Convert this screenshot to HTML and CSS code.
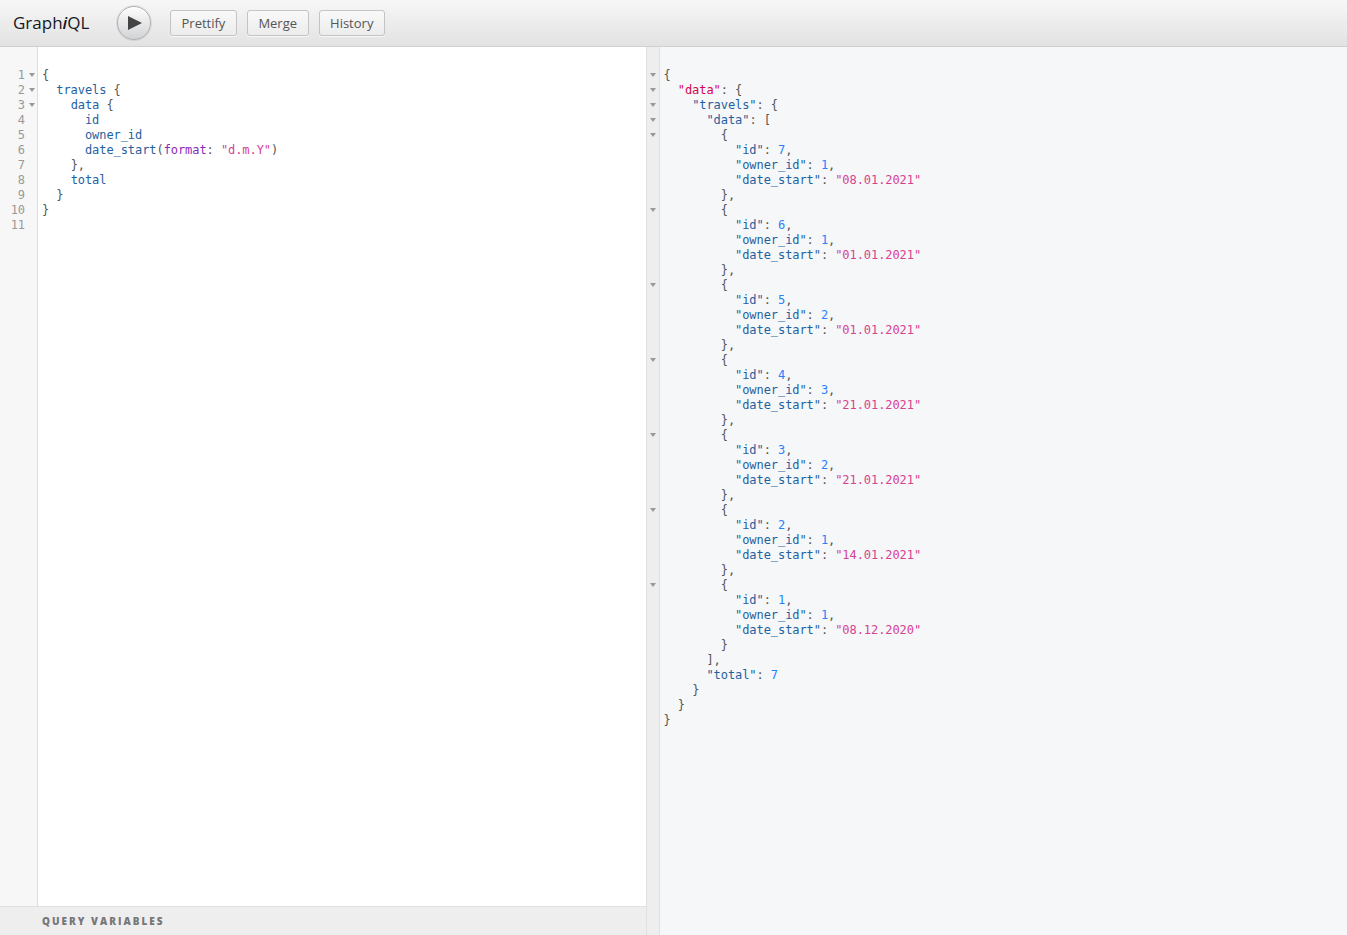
FILE: index.html
```html
<!DOCTYPE html>
<html lang="en">
<head>
    <meta charset="UTF-8">
    <meta name="viewport" content="width=device-width, initial-scale=1.0">
    <title>GraphiQL</title>
    <link rel="stylesheet" href="styles.css">
</head>
<body>
    <div class="topbar">
        <div class="logo">Graph<em>i</em>QL</div>
        <button class="run-button" aria-label="Run">
            <svg width="14" height="14" viewBox="0 0 14 14"><path d="M0 0 L14 7 L0 14 Z" fill="#444"></path></svg>
        </button>
        <button class="tool-button">Prettify</button>
        <button class="tool-button">Merge</button>
        <button class="tool-button">History</button>
    </div>

    <div class="panes">
        <!-- Query editor -->
        <section class="query-pane">
            <div class="editor">
                <div class="gutter">
                    <div class="num">1<i class="fold"></i></div>
                    <div class="num">2<i class="fold"></i></div>
                    <div class="num">3<i class="fold"></i></div>
                    <div class="num">4</div>
                    <div class="num">5</div>
                    <div class="num">6</div>
                    <div class="num">7</div>
                    <div class="num">8</div>
                    <div class="num">9</div>
                    <div class="num">10</div>
                    <div class="num">11</div>
                </div>
<pre class="code"><span class="p">{</span>
  <span class="prop">travels</span> <span class="p">{</span>
    <span class="prop">data</span> <span class="p">{</span>
      <span class="prop">id</span>
      <span class="prop">owner_id</span>
      <span class="prop">date_start</span><span class="p">(</span><span class="attr">format</span><span class="p">:</span> <span class="str">"d.m.Y"</span><span class="p">)</span>
    <span class="p">},</span>
    <span class="prop">total</span>
  <span class="p">}</span>
<span class="p">}</span>
</pre>
            </div>
            <div class="vars-bar">Query Variables</div>
        </section>

        <!-- Result viewer -->
        <section class="result-pane">
            <div class="gutter result-gutter">
                <div class="mark"><i class="fold"></i></div>
                <div class="mark"><i class="fold"></i></div>
                <div class="mark"><i class="fold"></i></div>
                <div class="mark"><i class="fold"></i></div>
                <div class="mark"><i class="fold"></i></div>
                <div class="mark"></div><div class="mark"></div><div class="mark"></div><div class="mark"></div>
                <div class="mark"><i class="fold"></i></div>
                <div class="mark"></div><div class="mark"></div><div class="mark"></div><div class="mark"></div>
                <div class="mark"><i class="fold"></i></div>
                <div class="mark"></div><div class="mark"></div><div class="mark"></div><div class="mark"></div>
                <div class="mark"><i class="fold"></i></div>
                <div class="mark"></div><div class="mark"></div><div class="mark"></div><div class="mark"></div>
                <div class="mark"><i class="fold"></i></div>
                <div class="mark"></div><div class="mark"></div><div class="mark"></div><div class="mark"></div>
                <div class="mark"><i class="fold"></i></div>
                <div class="mark"></div><div class="mark"></div><div class="mark"></div><div class="mark"></div>
                <div class="mark"><i class="fold"></i></div>
            </div>
<pre class="code result-code"><span class="p">{</span>
  <span class="def">"data"</span><span class="p">:</span> <span class="p">{</span>
    <span class="prop">"travels"</span><span class="p">:</span> <span class="p">{</span>
      <span class="prop">"data"</span><span class="p">:</span> <span class="p">[</span>
        <span class="p">{</span>
          <span class="prop">"id"</span><span class="p">:</span> <span class="num-val">7</span><span class="p">,</span>
          <span class="prop">"owner_id"</span><span class="p">:</span> <span class="num-val">1</span><span class="p">,</span>
          <span class="prop">"date_start"</span><span class="p">:</span> <span class="str">"08.01.2021"</span>
        <span class="p">},</span>
        <span class="p">{</span>
          <span class="prop">"id"</span><span class="p">:</span> <span class="num-val">6</span><span class="p">,</span>
          <span class="prop">"owner_id"</span><span class="p">:</span> <span class="num-val">1</span><span class="p">,</span>
          <span class="prop">"date_start"</span><span class="p">:</span> <span class="str">"01.01.2021"</span>
        <span class="p">},</span>
        <span class="p">{</span>
          <span class="prop">"id"</span><span class="p">:</span> <span class="num-val">5</span><span class="p">,</span>
          <span class="prop">"owner_id"</span><span class="p">:</span> <span class="num-val">2</span><span class="p">,</span>
          <span class="prop">"date_start"</span><span class="p">:</span> <span class="str">"01.01.2021"</span>
        <span class="p">},</span>
        <span class="p">{</span>
          <span class="prop">"id"</span><span class="p">:</span> <span class="num-val">4</span><span class="p">,</span>
          <span class="prop">"owner_id"</span><span class="p">:</span> <span class="num-val">3</span><span class="p">,</span>
          <span class="prop">"date_start"</span><span class="p">:</span> <span class="str">"21.01.2021"</span>
        <span class="p">},</span>
        <span class="p">{</span>
          <span class="prop">"id"</span><span class="p">:</span> <span class="num-val">3</span><span class="p">,</span>
          <span class="prop">"owner_id"</span><span class="p">:</span> <span class="num-val">2</span><span class="p">,</span>
          <span class="prop">"date_start"</span><span class="p">:</span> <span class="str">"21.01.2021"</span>
        <span class="p">},</span>
        <span class="p">{</span>
          <span class="prop">"id"</span><span class="p">:</span> <span class="num-val">2</span><span class="p">,</span>
          <span class="prop">"owner_id"</span><span class="p">:</span> <span class="num-val">1</span><span class="p">,</span>
          <span class="prop">"date_start"</span><span class="p">:</span> <span class="str">"14.01.2021"</span>
        <span class="p">},</span>
        <span class="p">{</span>
          <span class="prop">"id"</span><span class="p">:</span> <span class="num-val">1</span><span class="p">,</span>
          <span class="prop">"owner_id"</span><span class="p">:</span> <span class="num-val">1</span><span class="p">,</span>
          <span class="prop">"date_start"</span><span class="p">:</span> <span class="str">"08.12.2020"</span>
        <span class="p">}</span>
      <span class="p">],</span>
      <span class="prop">"total"</span><span class="p">:</span> <span class="num-val">7</span>
    <span class="p">}</span>
  <span class="p">}</span>
<span class="p">}</span></pre>
        </section>
    </div>
</body>
</html>
```

FILE: styles.css
```css
* {
    box-sizing: border-box;
}
html, body {
    height: 100%;
}
body {
    margin: 0;
    display: flex;
    flex-direction: column;
    overflow: hidden;
    font-family: "Open Sans", sans-serif;
    color: #141823;
}
.topbar {
    height: 47px;
    flex-shrink: 0;
    display: flex;
    align-items: center;
    padding: 0 14px 1px 13px;
    background: linear-gradient(#f7f7f7, #e2e2e2);
    border-bottom: 1px solid #d0d0d0;
}
.logo {
    font-size: 17px;
    width: 104px;
}
.logo em {
    font-weight: 600;
}
.run-button {
    width: 34px;
    height: 34px;
    margin-right: 19px;
    padding: 0 0 0 2px;
    display: flex;
    align-items: center;
    justify-content: center;
    border: 1px solid #b0b0b0;
    border-radius: 50%;
    background: linear-gradient(#fdfdfd, #d2d3d6);
    box-shadow: 0 1px 0 #fff inset, 0 0 0 1px rgba(0, 0, 0, 0.08);
}
.tool-button {
    height: 26px;
    margin-right: 10px;
    padding: 0 10.5px;
    font-family: "Open Sans", sans-serif;
    font-size: 13px;
    color: #555;
    border: 1px solid #c4c4c4;
    border-radius: 3px;
    background: linear-gradient(#f9f9f9, #ececec);
    box-shadow: 0 1px 0 rgba(255, 255, 255, 0.7);
}
.panes {
    flex: 1;
    display: flex;
    min-height: 0;
}
.query-pane {
    width: 646px;
    display: flex;
    flex-direction: column;
    background: #fff;
}
.editor {
    flex: 1;
    display: flex;
    min-height: 0;
}
.gutter {
    flex-shrink: 0;
    padding-top: 21px;
    font-family: "DejaVu Sans Mono", monospace;
    font-size: 12px;
    line-height: 15px;
}
.editor .gutter {
    width: 38px;
    background: #f7f7f7;
    border-right: 1px solid #ddd;
}
.num {
    height: 15px;
    width: 25px;
    text-align: right;
    color: #999;
    letter-spacing: -0.07px;
    position: relative;
}
.fold {
    position: absolute;
    left: 29px;
    top: 5px;
    width: 0;
    height: 0;
    border-left: 3px solid transparent;
    border-right: 3px solid transparent;
    border-top: 4px solid #999;
}
.code {
    margin: 0;
    padding: 21px 0 0 4px;
    font-family: "DejaVu Sans Mono", monospace;
    font-size: 12px;
    line-height: 15px;
    letter-spacing: -0.07px;
    color: #555;
}
.result-code {
    padding-left: 3.5px;
}
.vars-bar {
    height: 29px;
    padding: 8px 0 0 42px;
    flex-shrink: 0;
    background: #eee;
    border-top: 1px solid #e0e0e0;
    font-size: 10px;
    line-height: 13px;
    font-weight: 800;
    letter-spacing: 2px;
    text-transform: uppercase;
    color: #777;
}
.result-pane {
    flex: 1;
    display: flex;
    background: #f6f7f8;
    border-left: 1px solid #e0e0e0;
}
.result-gutter {
    width: 13px;
    background: #eee;
    border-right: 1px solid #e0e0e0;
}
.mark {
    height: 15px;
    position: relative;
}
.mark .fold {
    left: 3px;
}
.p { color: #555; }
.prop { color: #1f61a0; }
.attr { color: #8b2bb9; }
.str { color: #d64292; }
.def { color: #d2054e; }
.num-val { color: #2882f9; }
```
